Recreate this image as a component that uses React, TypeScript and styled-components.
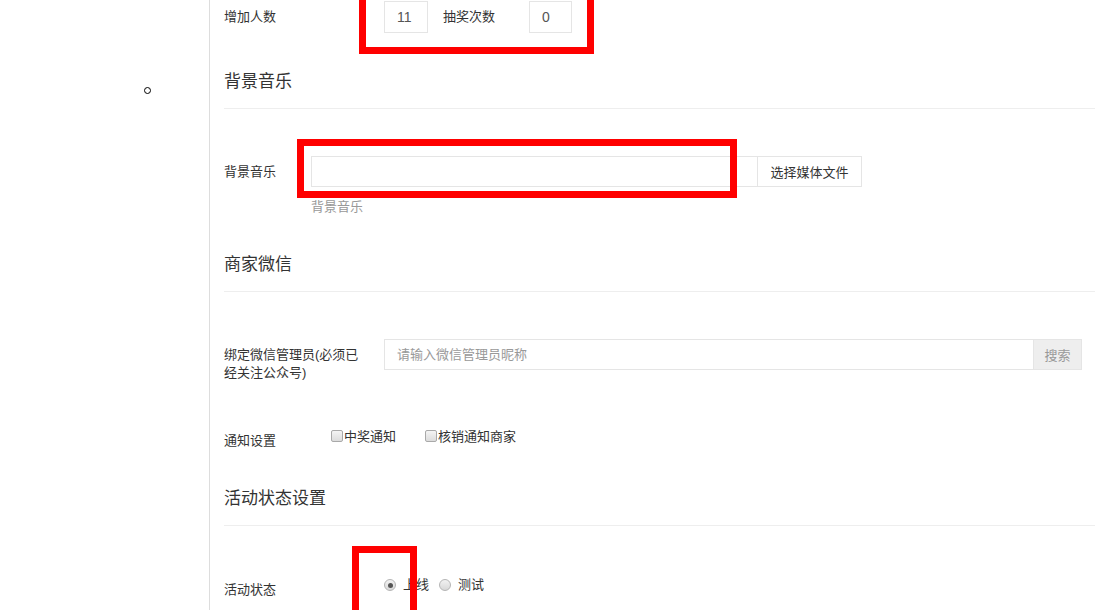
import styled, { createGlobalStyle } from "styled-components";

const GlobalStyle = createGlobalStyle`
  html, body {
    margin: 0;
    padding: 0;
    background: #fff;
    overflow: hidden;
  }
  body {
    font-family: "Liberation Sans", "Noto Sans CJK SC", sans-serif;
    font-size: 13px;
    color: #333;
  }
`;

const App = () => {
  return (
    <Page>
      <GlobalStyle />
      <Sidebar>
        <Bullet />
      </Sidebar>
      <Main>
        <Row>
          <Label width={160}>增加人数</Label>
          <SmallInput width={44} defaultValue="11" />
          <InlineText>抽奖次数</InlineText>
          <SmallInput width={43} defaultValue="0" />
        </Row>

        <SectionTitle>背景音乐</SectionTitle>
        <Row gap={47} center>
          <Label width={87}>背景音乐</Label>
          <InputGroup>
            <TextInput width={447} />
            <AddonButton>选择媒体文件</AddonButton>
          </InputGroup>
        </Row>
        <HelpText>背景音乐</HelpText>

        <SectionTitle>商家微信</SectionTitle>
        <Row gap={47}>
          <Label width={140} top={7} style={{ marginRight: 20 }}>
            绑定微信管理员(必须已经关注公众号)
          </Label>
          <InputGroup>
            <TextInput width={650} placeholder="请输入微信管理员昵称" />
            <SearchButton>搜索</SearchButton>
          </InputGroup>
        </Row>

        <Row gap={46}>
          <Label width={107} top={4}>通知设置</Label>
          <Choices>
            <Choice>
              <CheckBox type="checkbox" />
              中奖通知
            </Choice>
            <Choice>
              <CheckBox type="checkbox" />
              核销通知商家
            </Choice>
          </Choices>
        </Row>

        <SectionTitle gap={37}>活动状态设置</SectionTitle>
        <Row gap={50}>
          <Label width={160} top={5}>活动状态</Label>
          <RadioChoices>
            <RadioItem>
              <Radio type="radio" name="status" defaultChecked />
              上线
            </RadioItem>
            <RadioItem>
              <Radio type="radio" name="status" />
              测试
            </RadioItem>
          </RadioChoices>
        </Row>
      </Main>

      {/* 赤い注釈枠 */}
      <Marker left={359} top={-10} width={235} height={64} />
      <Marker left={297} top={139} width={440} height={59} />
      <Marker left={352} top={546} width={65} height={80} />
    </Page>
  );
};

export default App;

const Page = styled.div`
  position: relative;
  display: flex;
  width: 1095px;
  height: 610px;
  overflow: hidden;
`;

const Sidebar = styled.div`
  width: 210px;
  flex-shrink: 0;
  border-right: 1px solid #ddd;
  box-sizing: border-box;
  padding: 87px 0 0 144px;
`;

const Bullet = styled.span`
  display: block;
  width: 5px;
  height: 5px;
  border: 1px solid #000;
  border-radius: 50%;
`;

const Main = styled.div`
  flex: 1;
  padding: 1px 0 0 14px;
`;

const Row = styled.div<{ gap?: number; center?: boolean }>`
  display: flex;
  align-items: ${(p) => (p.center ? "center" : "flex-start")};
  margin-top: ${(p) => p.gap ?? 0}px;
`;

const Label = styled.div<{ width: number; top?: number }>`
  width: ${(p) => p.width}px;
  flex-shrink: 0;
  padding-top: ${(p) => p.top ?? 0}px;
  line-height: 18px;
  align-self: ${(p) => (p.top === undefined ? "center" : "flex-start")};
`;

const SmallInput = styled.input<{ width: number }>`
  width: ${(p) => p.width}px;
  height: 32px;
  box-sizing: border-box;
  border: 1px solid #e5e5e5;
  padding: 0 0 0 12px;
  font-family: "Liberation Sans", sans-serif;
  font-size: 14px;
  color: #555;
  outline: none;
`;

const InlineText = styled.span`
  margin: 0 34px 0 15px;
  line-height: 32px;
`;

const SectionTitle = styled.div<{ gap?: number }>`
  margin-top: ${(p) => p.gap ?? 37}px;
  padding-bottom: 14px;
  font-size: 17px;
  line-height: 24px;
  border-bottom: 1px solid #eee;
`;

const InputGroup = styled.div`
  display: flex;
`;

const TextInput = styled.input<{ width: number }>`
  width: ${(p) => p.width}px;
  height: 31px;
  box-sizing: border-box;
  border: 1px solid #e5e5e5;
  padding: 0 12px;
  font-family: "Liberation Sans", "Noto Sans CJK SC", sans-serif;
  font-size: 13px;
  color: #555;
  outline: none;
  &::placeholder {
    color: #999;
  }
`;

const AddonButton = styled.button`
  height: 31px;
  width: 104px;
  box-sizing: border-box;
  border: 1px solid #e5e5e5;
  border-left: none;
  background: #fff;
  font-family: "Liberation Sans", "Noto Sans CJK SC", sans-serif;
  font-size: 13px;
  color: #333;
  padding: 0;
`;

const SearchButton = styled.button`
  height: 31px;
  width: 48px;
  box-sizing: border-box;
  border: 1px solid #e5e5e5;
  border-left: none;
  background: #eee;
  font-family: "Liberation Sans", "Noto Sans CJK SC", sans-serif;
  font-size: 13px;
  color: #999;
  padding: 0;
`;

const HelpText = styled.div`
  margin: 11px 0 0 87px;
  line-height: 18px;
  color: #999;
`;

const Choices = styled.div`
  display: flex;
  gap: 29px;
`;

const Choice = styled.label`
  display: flex;
  align-items: center;
  line-height: 18px;
`;

const CheckBox = styled.input`
  appearance: none;
  width: 12px;
  height: 12px;
  margin: 0 1px 2px 0;
  box-sizing: border-box;
  border: 1px solid #a9a9a9;
  border-radius: 2px;
  background: linear-gradient(#f4f4f4, #dcdcdc);
`;

const RadioChoices = styled.div`
  display: flex;
  gap: 10px;
`;

const RadioItem = styled.label`
  display: flex;
  align-items: center;
  line-height: 18px;
`;

const Radio = styled.input`
  appearance: none;
  width: 12px;
  height: 12px;
  margin: 0 7px 0 0;
  box-sizing: border-box;
  border: 1px solid #b5b5b5;
  border-radius: 50%;
  background: linear-gradient(#f2f2f2, #d8d8d8);
  position: relative;
  &:checked::after {
    content: "";
    position: absolute;
    left: 2.5px;
    top: 2.5px;
    width: 5px;
    height: 5px;
    border-radius: 50%;
    background: #555;
  }
`;

const Marker = styled.div<{ left: number; top: number; width: number; height: number }>`
  position: absolute;
  left: ${(p) => p.left}px;
  top: ${(p) => p.top}px;
  width: ${(p) => p.width}px;
  height: ${(p) => p.height}px;
  box-sizing: border-box;
  border: 7px solid #ff0000;
  pointer-events: none;
`;
